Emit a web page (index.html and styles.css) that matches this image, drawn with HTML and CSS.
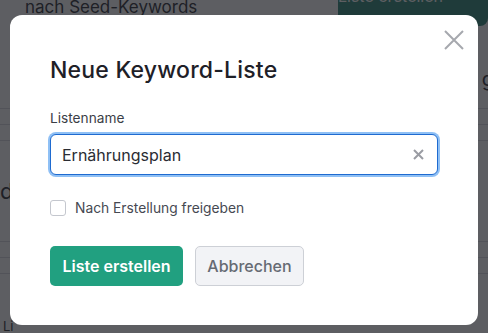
FILE: index.html
```html
<!DOCTYPE html>
<html lang="de">
<head>
    <meta charset="UTF-8">
    <meta name="viewport" content="width=device-width, initial-scale=1.0">
    <title>Neue Keyword-Liste</title>
    <link rel="stylesheet" href="styles.css">
</head>
<body>
    <div class="page">
        <div class="page-top">
            <span class="page-sub">nach Seed-Keywords</span>
            <span class="page-btn">Liste erstellen</span>
        </div>
        <div class="page-row page-row-g"><span>g</span></div>
        <div class="page-row page-line"></div>
        <div class="page-row page-line"></div>
        <div class="page-row page-d"><span>d</span></div>
        <div class="page-row page-line"></div>
        <div class="page-row page-line"></div>
        <div class="page-row page-l"><span>Li</span></div>
    </div>

    <div class="overlay">
        <div class="modal">
            <button class="modal-close" aria-label="Schließen">
                <svg width="20" height="20" viewBox="0 0 20 20">
                    <path d="M1 1 L19 19 M19 1 L1 19" stroke="#a6a8ae" stroke-width="2" fill="none"/>
                </svg>
            </button>
            <h1>Neue Keyword-Liste</h1>
            <label class="field-label" for="listName">Listenname</label>
            <div class="field">
                <input type="text" id="listName" value="Ernährungsplan">
                <span class="field-clear">
                    <svg width="11" height="11" viewBox="0 0 11 11">
                        <path d="M1 1 L10 10 M10 1 L1 10" stroke="#9a9ca3" stroke-width="2" fill="none"/>
                    </svg>
                </span>
            </div>
            <label class="check">
                <span class="check-box"></span>
                Nach Erstellung freigeben
            </label>
            <div class="actions">
                <button class="btn btn-primary">Liste erstellen</button>
                <button class="btn btn-secondary">Abbrechen</button>
            </div>
        </div>
    </div>
</body>
</html>
```

FILE: styles.css
```css
body {
    margin: 0;
    font-family: Inter, "Noto Sans", sans-serif;
    background: #ffffff;
    overflow: hidden;
    height: 333px;
}
.page {
    color: #2f3138;
}
.page-top {
    display: flex;
    justify-content: space-between;
    height: 27px;
}
.page-sub {
    font-size: 17px;
    padding-left: 25px;
    margin-top: -3px;
}
.page-btn {
    width: 150px;
    background: #2f8a78;
    border-radius: 8px;
    color: #fff;
    margin-top: -14px;
    height: 40px;
}
.page-row {
    border-bottom: 1px solid #d9dbe0;
}
.page-row-g {
    height: 82px;
    display: flex;
    justify-content: flex-end;
    font-size: 20px;
    padding-top: 40px;
    box-sizing: border-box;
    margin-right: -6px;
}
.page-line {
    height: 15px;
}
.page-d {
    height: 100px;
    font-size: 22px;
    display: flex;
    align-items: center;
}
.page-l {
    height: 60px;
    font-size: 13px;
    display: flex;
    align-items: flex-end;
    padding-left: 3px;
}
.overlay {
    position: fixed;
    inset: 0;
    background: rgba(24, 25, 32, 0.7);
    display: flex;
    padding: 15px 11px 8px 10px;
}
.modal {
    position: relative;
    flex: 1;
    background: #ffffff;
    border-radius: 12px;
    padding: 40px 40px 0 40px;
}
.modal-close {
    position: absolute;
    top: 15px;
    right: 14px;
    background: none;
    border: none;
    padding: 0;
    cursor: pointer;
    line-height: 0;
}
h1 {
    margin: 0 0 25px;
    font-size: 23px;
    font-weight: 500;
    color: #1e2027;
    line-height: 30px;
    letter-spacing: 0.2px;
}
.field-label {
    display: block;
    font-size: 13.7px;
    color: #3b3e46;
    margin-bottom: 8px;
}
.field {
    position: relative;
    width: 388px;
}
.field input {
    box-sizing: border-box;
    width: 100%;
    height: 41px;
    border: 1px solid #1f6bd0;
    border-radius: 6px;
    box-shadow: 0 0 0 2px #8fc0f5;
    padding: 0 30px 0 11px;
    font-family: inherit;
    font-size: 16px;
    color: #2a2c33;
    outline: none;
}
.field-clear {
    position: absolute;
    right: 14px;
    top: 15px;
    line-height: 0;
}
.check {
    display: flex;
    align-items: center;
    gap: 9px;
    margin-top: 25px;
    font-size: 13.8px;
    color: #464952;
}
.check-box {
    width: 14px;
    height: 14px;
    border: 1px solid #c4c7ce;
    border-radius: 3px;
}
.actions {
    display: flex;
    gap: 12px;
    margin-top: 30px;
}
.btn {
    height: 40px;
    border-radius: 5px;
    font-family: inherit;
    font-size: 16px;
    padding: 0 10px;
    cursor: pointer;
}
.btn-primary {
    width: 133px;
    background: #21a080;
    color: #fff;
    border: none;
    font-weight: 600;
}
.btn-secondary {
    width: 109px;
    background: #f2f3f6;
    color: #666a73;
    border: 1px solid #cdd0d6;
    font-weight: 500;
}
```
